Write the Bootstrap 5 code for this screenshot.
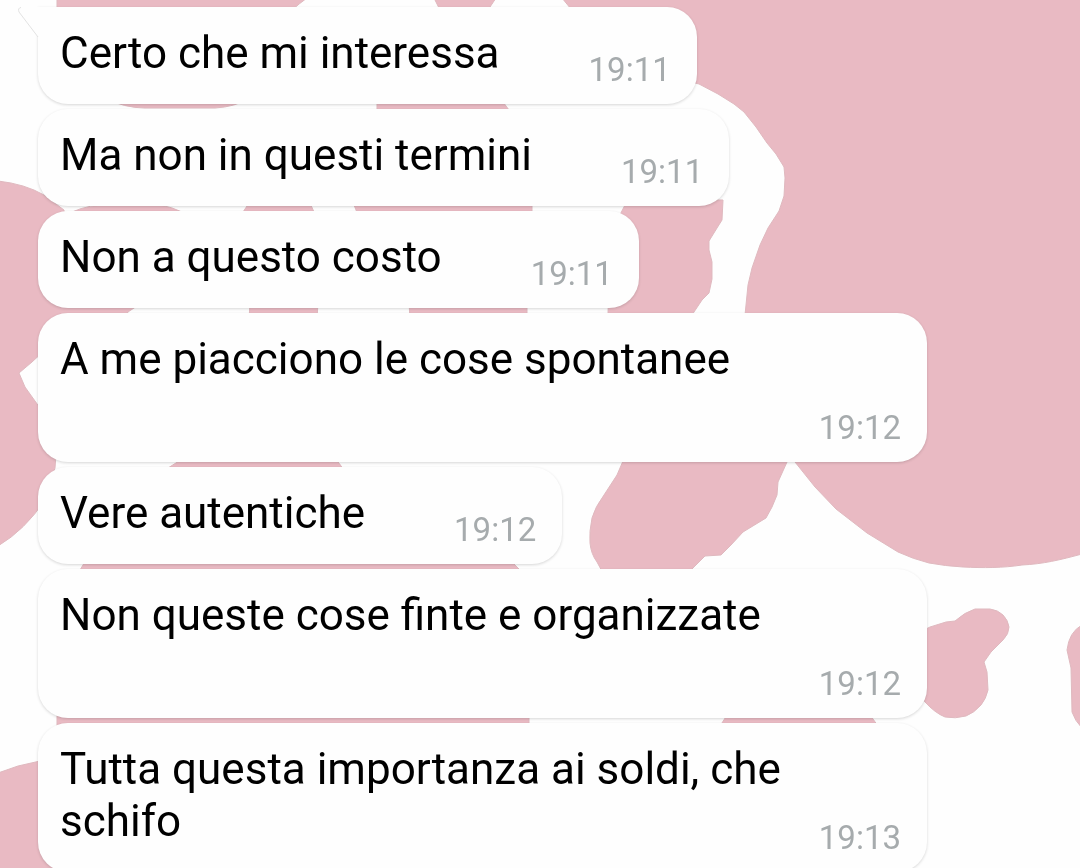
<!DOCTYPE html>
<html lang="it">
<head>
<meta charset="utf-8">
<meta name="viewport" content="width=device-width, initial-scale=1">
<title>Chat</title>
<link href="https://cdn.jsdelivr.net/npm/bootstrap@5.3.0/dist/css/bootstrap.min.css" rel="stylesheet">
<style>
  body { font-family: Roboto, "Liberation Sans", sans-serif; color: #000; background: #fefefe; }
  .wallpaper { z-index: -1; }
  .chat { gap: 5px; padding: 7px 38px 0; scrollbar-width: none; }
  .bubble { max-width: 889px; padding: 20px 26px 15px 22px; border-radius: 30px; background: #fefefe; box-shadow: 0 1px 3px rgba(0, 0, 0, .16); gap: 89px; }
  .bubble-wide { width: 100%; min-height: 149px; gap: 16px; }
  .bubble-first { border-top-left-radius: 0; }
  .tail { top: 0; left: -20px; width: 21px; height: 33px; }
  .message { font-size: 44px; line-height: 52px; margin: 0 0 10px; }
  .stamp { font-size: 33px; line-height: 39px; color: #a6abad; }
</style>
</head>
<body>
<svg class="wallpaper position-fixed top-0 start-0 w-100 h-100" viewBox="0 0 1080 868" preserveAspectRatio="xMinYMin slice" aria-hidden="true">
  <g fill="#e9bac3" stroke="#dfb9bf" stroke-width="1">
    <path d="M57-2H307Q300 3 292 10H57Z"/>
    <path d="M434-2H496L488 10H440Z"/>
    <path d="M562-2H1082V554C1060 560 1043 564 1022 565C1003 568 983 568 963 567Q945 566 929 563Q913 559 898 552L867 533L836 509L815 487L795 462L788 450V420L745 315L748 285L752 268L760 245L768 228L779 211L784 196L785 178L784 167L776 154L767 143L756 127L744 112L734 104L718 94L699 84L640 70L580 20Z"/>
    <path d="M104 98Q125 108 145 108H215Q235 107 250 98Z"/>
    <path d="M377 110V98H500L509 110Z"/>
    <path d="M-2 181Q25 184 44 195L64 210L70 300L140 304Q130 310 118 320L45 350L32 362L19 373L25 387L45 415L56 455L55 468L45 500Q25 530-2 546Z"/>
    <path d="M72 212Q90 204 110 205H160Q172 207 182 212Z"/>
    <path d="M243 212L249 203H310L314 212Z"/>
    <path d="M352 200H532V215H358Z"/>
    <path d="M610 225Q624 213 626 200H723L722 220L717 228L709 241L709 250L712 262L712 279L709 293L702 300L692 315H608Z"/>
    <path d="M250 302H318L317 320H249Z"/>
    <path d="M409 302H527V320H410Z"/>
    <path d="M165 470Q180 460 190 455H330Q338 460 344 470Z"/>
    <path d="M625 450L623 461L617 475L604 495Q595 507 592 518Q589 532 590 543Q591 554 597 562L604 575H686L693 568L705 556L721 555L731 545L743 532L766 518L772 507L777 495L778 482L787 462L790 450Z"/>
    <path d="M80 570L86 560H510L520 570Z"/>
    <path d="M915 640Q922 630 930 627L946 622L955 621Q965 612 975 609H990Q998 610 1003 615Q1008 620 1009 627Q1009 634 1003 640L991 652L984 662L987 672L988 690Q986 699 981 705Q974 713 966 716Q955 719 945 717Q935 713 925 702L915 688Z"/>
    <path d="M1082 625Q1069 632 1067 650L1071 668L1072 712Q1075 721 1082 728Z"/>
    <path d="M57 710H529V735H57Z"/>
    <path d="M720 726L729 712H868L878 726Z"/>
    <path d="M-2 773L18 766L40 761L90 790V870H-2Z"/>
  </g>
</svg>
<main class="chat vh-100 overflow-auto d-flex flex-column align-items-start">
  <article class="bubble bubble-first position-relative d-flex flex-shrink-0 align-items-end">
    <svg class="tail position-absolute" viewBox="0 0 21 33" aria-hidden="true">
      <path d="M21 0H3Q-1 0 1 5L20 30H21Z" fill="#fefefe"/>
      <path d="M3 .5Q-.5 1 1 5L20 30" fill="none" stroke="#e2e2e2"/>
    </svg>
    <p class="message">Certo che mi interessa</p>
    <time class="stamp" datetime="19:11">19:11</time>
  </article>
  <article class="bubble d-flex flex-shrink-0 align-items-end">
    <p class="message">Ma non in questi termini</p>
    <time class="stamp" datetime="19:11">19:11</time>
  </article>
  <article class="bubble d-flex flex-shrink-0 align-items-end">
    <p class="message">Non a questo costo</p>
    <time class="stamp" datetime="19:11">19:11</time>
  </article>
  <article class="bubble bubble-wide d-flex flex-shrink-0 align-items-end">
    <p class="message flex-fill align-self-start">A me piacciono le cose spontanee</p>
    <time class="stamp" datetime="19:12">19:12</time>
  </article>
  <article class="bubble d-flex flex-shrink-0 align-items-end">
    <p class="message">Vere autentiche</p>
    <time class="stamp" datetime="19:12">19:12</time>
  </article>
  <article class="bubble bubble-wide d-flex flex-shrink-0 align-items-end">
    <p class="message flex-fill align-self-start">Non queste cose finte e organizzate</p>
    <time class="stamp" datetime="19:12">19:12</time>
  </article>
  <article class="bubble bubble-wide d-flex flex-shrink-0 align-items-end">
    <p class="message flex-fill align-self-start">Tutta questa importanza ai soldi, che schifo</p>
    <time class="stamp" datetime="19:13">19:13</time>
  </article>
</main>
<script src="https://cdn.jsdelivr.net/npm/bootstrap@5.3.0/dist/js/bootstrap.bundle.min.js"></script>
</body>
</html>
